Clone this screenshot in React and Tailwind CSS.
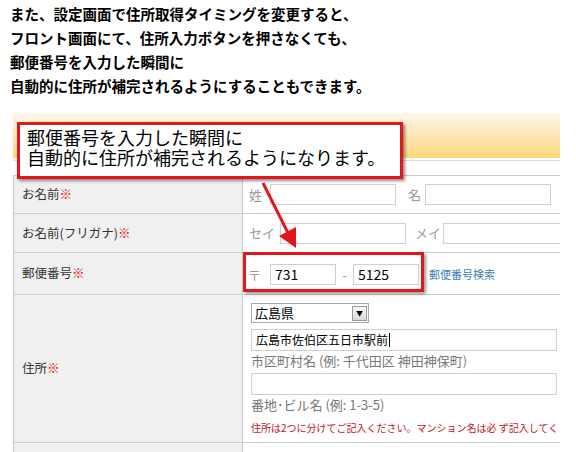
export default function App() {
  return (
    <div
      className="w-[576px] h-[452px] overflow-hidden bg-white text-black"
      style={{ fontFamily: '"Noto Sans CJK JP", "Noto Sans", sans-serif' }}
    >
      {/* intro text */}
      <div className="pl-[10px] pt-[2px] text-[14.5px] font-bold leading-[24px]">
        <p>また、設定画面で住所取得タイミングを変更すると、</p>
        <p>フロント画面にて、住所入力ボタンを押さなくても、</p>
        <p>郵便番号を入力した瞬間に</p>
        <p>自動的に住所が補完されるようにすることもできます。</p>
      </div>

      {/* form screenshot */}
      <div className="relative mt-[15px] ml-[13px] w-[547px]">
        <div className="h-[45px] bg-linear-to-b from-[#fdf6ea] to-[#fbd876]" />
        <div className="mt-[2px] h-px bg-[#dcdcdc]" />

        <div className="mt-[14px] border-t border-l border-[#cccccc] text-[12.5px] text-[#333]">
          {/* name */}
          <div className="grid h-[38px] grid-cols-[229px_1fr] border-b border-[#cccccc]">
            <div className="flex items-center border-r border-[#cccccc] bg-[#f0f0f0] pl-[8px]">
              お名前<span className="text-[#d0101a]">※</span>
            </div>
            <div className="flex items-center overflow-hidden whitespace-nowrap pl-[6px] text-[13px] text-[#999]">
              <span className="w-[21px] shrink-0">姓</span>
              <div className="h-[21px] w-[126px] shrink-0 border border-[#cfcfcf] bg-white" />
              <span className="ml-[12px] w-[17px] shrink-0">名</span>
              <div className="h-[21px] w-[126px] shrink-0 border border-[#cfcfcf] bg-white" />
            </div>
          </div>

          {/* furigana */}
          <div className="grid h-[39px] grid-cols-[229px_1fr] border-b border-[#cccccc]">
            <div className="flex items-center border-r border-[#cccccc] bg-[#f0f0f0] pl-[8px]">
              お名前(フリガナ)<span className="text-[#d0101a]">※</span>
            </div>
            <div className="flex items-center overflow-hidden whitespace-nowrap pl-[6px] text-[13px] text-[#999]">
              <span className="w-[31px] shrink-0">セイ</span>
              <div className="h-[21px] w-[126px] shrink-0 border border-[#cfcfcf] bg-white" />
              <span className="ml-[9px] w-[28px] shrink-0">メイ</span>
              <div className="h-[21px] w-[140px] shrink-0 border border-[#cfcfcf] bg-white" />
            </div>
          </div>

          {/* zip */}
          <div className="grid h-[42px] grid-cols-[229px_1fr] border-b border-[#cccccc]">
            <div className="flex items-center border-r border-[#cccccc] bg-[#f0f0f0] pl-[8px]">
              郵便番号<span className="text-[#d0101a]">※</span>
            </div>
            <div className="flex items-center whitespace-nowrap pl-[5px] pt-[2px] text-[13px] text-[#999]">
              <span className="w-[22px] shrink-0">〒</span>
              <div className="flex h-[21px] w-[66px] shrink-0 items-center border border-[#cfcfcf] bg-white pl-[4px] text-[14px] text-black">
                731
              </div>
              <span className="w-[17px] shrink-0 text-center">-</span>
              <div className="flex h-[21px] w-[66px] shrink-0 items-center border border-[#cfcfcf] bg-white pl-[4px] text-[14px] text-black">
                5125
              </div>
              <span className="ml-[10px] text-[11px] text-[#3a7fb5]">郵便番号検索</span>
            </div>
          </div>

          {/* address */}
          <div className="grid h-[148px] grid-cols-[229px_1fr] border-b border-[#cccccc]">
            <div className="flex items-center border-r border-[#cccccc] bg-[#f0f0f0] pl-[8px]">
              住所<span className="text-[#d0101a]">※</span>
            </div>
            <div className="overflow-hidden pl-[8px] pt-[8px] text-[13px]">
              <div className="flex h-[20px] w-[118px] items-center justify-between border border-[#a8a8a8] bg-white pl-[3px] pr-[1px] text-[13px] text-black">
                <span>広島県</span>
                <span className="flex h-[15px] w-[15px] items-center justify-center border border-[#999] bg-linear-to-b from-[#fafafa] to-[#d8d8d8] text-[7px] leading-none">
                  ▼
                </span>
              </div>
              <div className="mt-[6px] flex h-[22px] w-[306px] items-center border border-[#cfcfcf] bg-white pl-[4px] text-[12px] text-black">
                広島市佐伯区五日市駅前
                <span className="ml-[1px] h-[14px] w-px bg-black" />
              </div>
              <div className="mt-[1px] leading-[18px] text-[#777]">市区町村名 (例: 千代田区 神田神保町)</div>
              <div className="mt-[3px] h-[22px] w-[306px] border border-[#cfcfcf] bg-white" />
              <div className="mt-[1px] leading-[18px] text-[#777]">番地･ビル名 (例: 1-3-5)</div>
              <div className="mt-[6px] overflow-hidden whitespace-nowrap text-[10px] text-[#c4121a]">
                住所は2つに分けてご記入ください。マンション名は必 ず記入してく
              </div>
            </div>
          </div>

          <div className="grid h-[20px] grid-cols-[229px_1fr]">
            <div className="border-r border-[#cccccc] bg-[#f0f0f0]" />
            <div />
          </div>
        </div>

        {/* callout */}
        <div className="absolute left-[4px] top-[9px] h-[57px] w-[386px] border-[3px] border-[#e3171b] bg-white pl-[7px] pt-[2px] text-[18px] leading-[20px] text-black shadow-[2px_2px_3px_rgba(0,0,0,0.45)]">
          <p>郵便番号を入力した瞬間に</p>
          <p>自動的に住所が補完されるようになります。</p>
        </div>

        {/* highlight */}
        <div className="absolute left-[230px] top-[139px] h-[40px] w-[181px] border-[3px] border-[#e3171b] shadow-[2px_2px_3px_rgba(0,0,0,0.4)]" />

        {/* arrow */}
        <svg className="pointer-events-none absolute left-0 top-0" width="547" height="340">
          <line x1="250" y1="70" x2="275" y2="120" stroke="#e3171b" strokeWidth="3" />
          <polygon points="283,135 283,114 266,123" fill="#e3171b" />
        </svg>
      </div>
    </div>
  );
}
